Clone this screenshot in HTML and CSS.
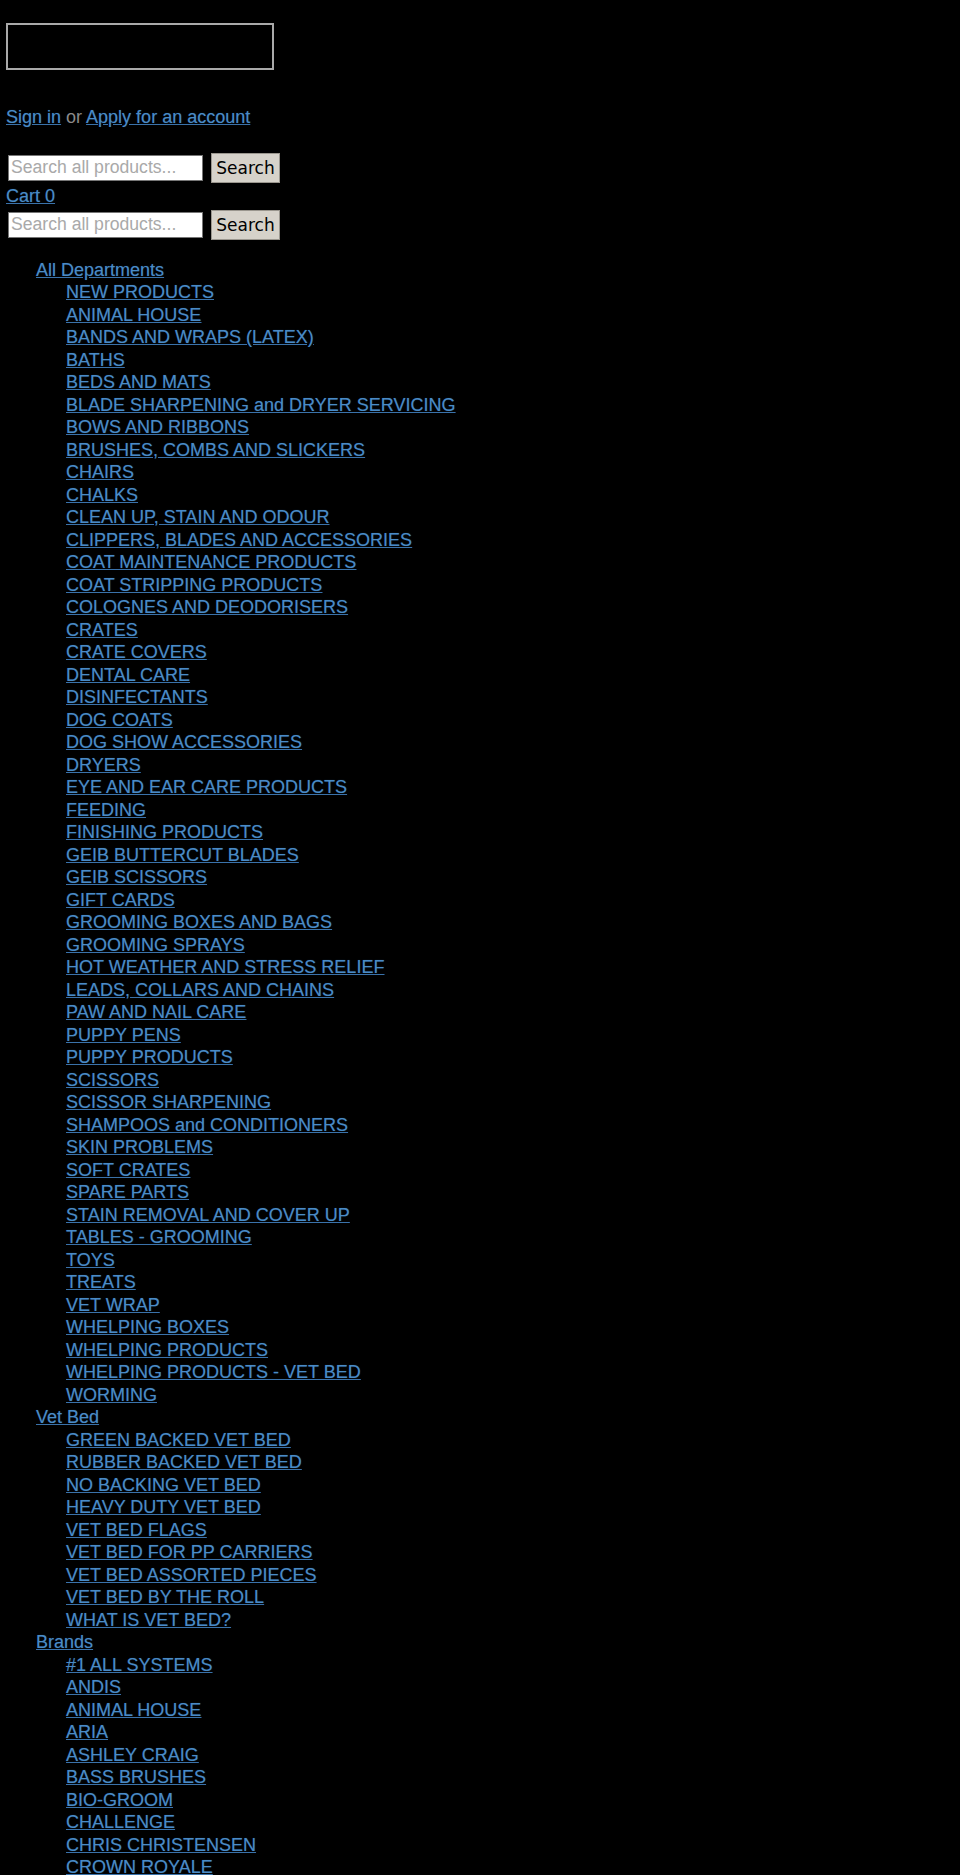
FILE: index.html
```html
<!DOCTYPE html>
<html lang="en">
<head>
<meta charset="utf-8">
<title>Store</title>
<link rel="stylesheet" href="styles.css">
</head>
<body>
<header class="site-header">
  <div class="logo-box"></div>
  <p class="account"><a href="#">Sign in</a> <span class="or">or</span> <a href="#">Apply for an account</a></p>
  <form class="search">
    <input class="search-input" type="text" placeholder="Search all products...">
    <button class="search-btn" type="button">Search</button>
  </form>
  <a class="cart" href="#">Cart 0</a>
  <form class="search search-second">
    <input class="search-input" type="text" placeholder="Search all products...">
    <button class="search-btn" type="button">Search</button>
  </form>
</header>
<nav class="menu">
  <ul class="top">
    <li><a href="#">All Departments</a>
      <ul class="sub">
        <li><a href="#">NEW PRODUCTS</a></li>
        <li><a href="#">ANIMAL HOUSE</a></li>
        <li><a href="#">BANDS AND WRAPS (LATEX)</a></li>
        <li><a href="#">BATHS</a></li>
        <li><a href="#">BEDS AND MATS</a></li>
        <li><a href="#">BLADE SHARPENING and DRYER SERVICING</a></li>
        <li><a href="#">BOWS AND RIBBONS</a></li>
        <li><a href="#">BRUSHES, COMBS AND SLICKERS</a></li>
        <li><a href="#">CHAIRS</a></li>
        <li><a href="#">CHALKS</a></li>
        <li><a href="#">CLEAN UP, STAIN AND ODOUR</a></li>
        <li><a href="#">CLIPPERS, BLADES AND ACCESSORIES</a></li>
        <li><a href="#">COAT MAINTENANCE PRODUCTS</a></li>
        <li><a href="#">COAT STRIPPING PRODUCTS</a></li>
        <li><a href="#">COLOGNES AND DEODORISERS</a></li>
        <li><a href="#">CRATES</a></li>
        <li><a href="#">CRATE COVERS</a></li>
        <li><a href="#">DENTAL CARE</a></li>
        <li><a href="#">DISINFECTANTS</a></li>
        <li><a href="#">DOG COATS</a></li>
        <li><a href="#">DOG SHOW ACCESSORIES</a></li>
        <li><a href="#">DRYERS</a></li>
        <li><a href="#">EYE AND EAR CARE PRODUCTS</a></li>
        <li><a href="#">FEEDING</a></li>
        <li><a href="#">FINISHING PRODUCTS</a></li>
        <li><a href="#">GEIB BUTTERCUT BLADES</a></li>
        <li><a href="#">GEIB SCISSORS</a></li>
        <li><a href="#">GIFT CARDS</a></li>
        <li><a href="#">GROOMING BOXES AND BAGS</a></li>
        <li><a href="#">GROOMING SPRAYS</a></li>
        <li><a href="#">HOT WEATHER AND STRESS RELIEF</a></li>
        <li><a href="#">LEADS, COLLARS AND CHAINS</a></li>
        <li><a href="#">PAW AND NAIL CARE</a></li>
        <li><a href="#">PUPPY PENS</a></li>
        <li><a href="#">PUPPY PRODUCTS</a></li>
        <li><a href="#">SCISSORS</a></li>
        <li><a href="#">SCISSOR SHARPENING</a></li>
        <li><a href="#">SHAMPOOS and CONDITIONERS</a></li>
        <li><a href="#">SKIN PROBLEMS</a></li>
        <li><a href="#">SOFT CRATES</a></li>
        <li><a href="#">SPARE PARTS</a></li>
        <li><a href="#">STAIN REMOVAL AND COVER UP</a></li>
        <li><a href="#">TABLES - GROOMING</a></li>
        <li><a href="#">TOYS</a></li>
        <li><a href="#">TREATS</a></li>
        <li><a href="#">VET WRAP</a></li>
        <li><a href="#">WHELPING BOXES</a></li>
        <li><a href="#">WHELPING PRODUCTS</a></li>
        <li><a href="#">WHELPING PRODUCTS - VET BED</a></li>
        <li><a href="#">WORMING</a></li>
      </ul>
    </li>
    <li><a href="#">Vet Bed</a>
      <ul class="sub">
        <li><a href="#">GREEN BACKED VET BED</a></li>
        <li><a href="#">RUBBER BACKED VET BED</a></li>
        <li><a href="#">NO BACKING VET BED</a></li>
        <li><a href="#">HEAVY DUTY VET BED</a></li>
        <li><a href="#">VET BED FLAGS</a></li>
        <li><a href="#">VET BED FOR PP CARRIERS</a></li>
        <li><a href="#">VET BED ASSORTED PIECES</a></li>
        <li><a href="#">VET BED BY THE ROLL</a></li>
        <li><a href="#">WHAT IS VET BED?</a></li>
      </ul>
    </li>
    <li><a href="#">Brands</a>
      <ul class="sub">
        <li><a href="#">#1 ALL SYSTEMS</a></li>
        <li><a href="#">ANDIS</a></li>
        <li><a href="#">ANIMAL HOUSE</a></li>
        <li><a href="#">ARIA</a></li>
        <li><a href="#">ASHLEY CRAIG</a></li>
        <li><a href="#">BASS BRUSHES</a></li>
        <li><a href="#">BIO-GROOM</a></li>
        <li><a href="#">CHALLENGE</a></li>
        <li><a href="#">CHRIS CHRISTENSEN</a></li>
        <li><a href="#">CROWN ROYALE</a></li>
      </ul>
    </li>
  </ul>
</nav>
</body>
</html>
```
FILE: styles.css
```css
html {
  background: #000;
}
body {
  margin: 0;
  padding: 0 0 0 6px;
  background: #000;
  color: #8a8a8a;
  font-family: "Liberation Sans", Arial, sans-serif;
  font-size: 18px;
  line-height: 22.5px;
}
a {
  color: #4a8bc6;
  text-decoration: underline;
  text-decoration-color: #3a72aa;
  text-shadow: 0 0 1px #163c64;
}
.logo-box {
  margin-top: 23px;
  width: 268px;
  height: 47px;
  box-sizing: border-box;
  border: 2px solid #a9a9a9;
}
.account {
  margin: 36px 0 0;
  height: 22.5px;
}
.or {
  color: #8a8a8a;
}
.search {
  margin: 24px 0 0;
  padding-left: 2px;
  display: flex;
  align-items: center;
  gap: 8px;
  height: 30px;
}
.search-second {
  margin-top: 2.5px;
}
.search-input {
  box-sizing: border-box;
  width: 195px;
  height: 26px;
  margin: 0;
  padding: 0 2px;
  border: 1px solid #767676;
  background: #fff;
  font-family: "Liberation Sans", Arial, sans-serif;
  font-size: 17.6px;
  color: #000;
}
.search-input::placeholder {
  color: #a9a9a9;
}
.search-btn {
  box-sizing: border-box;
  width: 69px;
  height: 30px;
  margin: 0;
  padding: 0;
  border: 1px solid #9a968e;
  background: #d6d2ca;
  color: #000;
  font-family: "DejaVu Sans", sans-serif;
  font-size: 17px;
}
.cart {
  display: inline-block;
  margin-top: 2px;
  height: 22.5px;
}
.menu {
  margin-top: 19px;
}
.top,
.sub {
  list-style: none;
  margin: 0;
  padding: 0 0 0 30px;
}
.top li {
  line-height: 22.5px;
}
```
